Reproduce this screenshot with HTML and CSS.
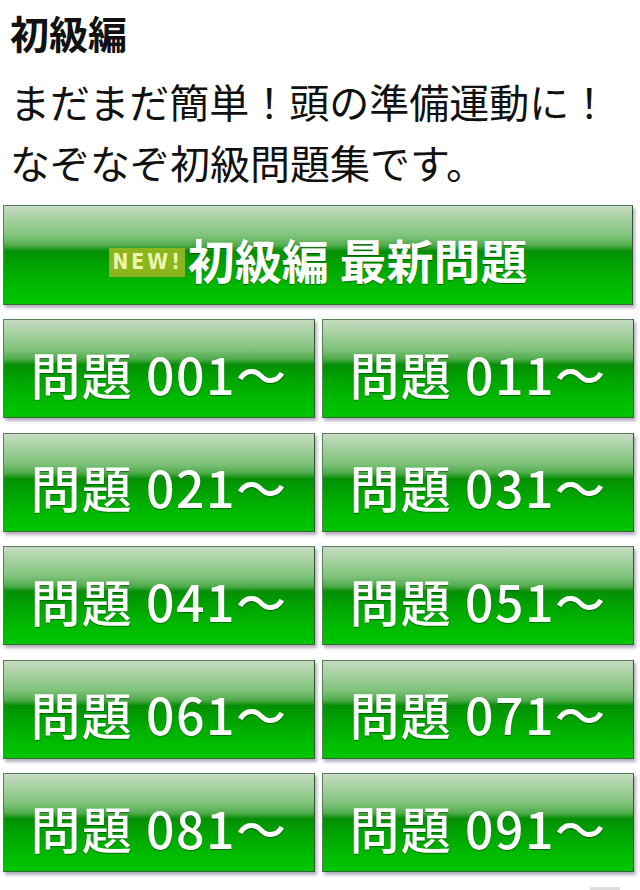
FILE: index.html
```html
<!DOCTYPE html>
<html lang="ja">
<head>
    <meta charset="UTF-8">
    <meta name="viewport" content="width=device-width, initial-scale=1.0">
    <title>初級編</title>
    <link rel="stylesheet" href="styles.css">
</head>
<body>
    <div class="intro">
        <h1 class="title">初級編</h1>
        <p class="lead">まだまだ簡単！頭の準備運動に！<br>なぞなぞ初級問題集です。</p>
    </div>

    <div class="menu">
        <a class="btn btn-wide" href="#"><span class="new">NEW!</span>初級編 最新問題</a>
        <div class="grid">
            <a class="btn" href="#">問題 001～</a>
            <a class="btn" href="#">問題 011～</a>
            <a class="btn" href="#">問題 021～</a>
            <a class="btn" href="#">問題 031～</a>
            <a class="btn" href="#">問題 041～</a>
            <a class="btn" href="#">問題 051～</a>
            <a class="btn" href="#">問題 061～</a>
            <a class="btn" href="#">問題 071～</a>
            <a class="btn" href="#">問題 081～</a>
            <a class="btn" href="#">問題 091～</a>
        </div>
        <div class="more"></div>
    </div>
</body>
</html>
```
FILE: styles.css
```css
body {
    margin: 0;
    background-color: #fff;
    font-family: "Noto Sans CJK JP", "Noto Sans", sans-serif;
    color: #111;
}
.intro {
    padding: 11px 0 0 10px;
}
.title {
    margin: 0;
    font-size: 39px;
    line-height: 42px;
    font-weight: 700;
}
.lead {
    margin: 18px 0 0;
    font-size: 40px;
    line-height: 61px;
    font-weight: 400;
}
.menu {
    padding: 12px 6px 0 3px;
}
.btn {
    display: flex;
    align-items: center;
    justify-content: center;
    height: 99px;
    padding-top: 8px;
    box-sizing: border-box;
    border: 1px solid #5c7d5c;
    border-right-color: #2f5a2f;
    border-bottom-color: #2f6a2f;
    background: linear-gradient(to bottom,
        #c6dcc2 0%,
        #aad2a4 12%,
        #80c37c 30%,
        #52ad4e 40%,
        #058f05 46%,
        #00a200 60%,
        #00ba00 82%,
        #00c600 100%);
    box-shadow: 2px 3px 3px rgba(90, 70, 110, 0.45);
    color: #fff;
    text-decoration: none;
    font-size: 50px;
    font-weight: 500;
    letter-spacing: 1.5px;
    white-space: nowrap;
    text-shadow: 0 1px 1px rgba(0, 60, 0, 0.6);
}
.btn-wide {
    height: 100px;
    margin-right: 1px;
    font-size: 47px;
    font-weight: 700;
    letter-spacing: 0;
    padding-top: 6px;
}
.new {
    display: inline-block;
    margin-right: 3px;
    padding: 0 2px 0 4px;
    height: 29px;
    line-height: 29px;
    background-color: #8cb41c;
    color: #eaf6b0;
    font-family: "DejaVu Sans Condensed", "Liberation Sans Narrow", sans-serif;
    font-size: 21px;
    font-weight: 700;
    letter-spacing: 3px;
    text-shadow: none;
    transform: translateY(4px);
}
.grid {
    display: grid;
    grid-template-columns: 1fr 1fr;
    column-gap: 7px;
    row-gap: 14.5px;
    margin-top: 14px;
}
.more {
    width: 30px;
    height: 6px;
    margin: 15px 14px 0 auto;
    background-color: #ddd;
}
```
